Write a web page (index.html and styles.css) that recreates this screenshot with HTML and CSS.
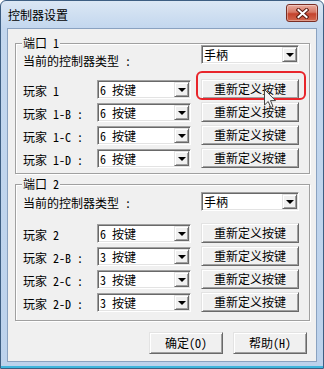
FILE: index.html
```html
<!DOCTYPE html>
<html lang="zh-CN">
<head>
    <meta charset="UTF-8">
    <title>控制器设置</title>
    <link rel="stylesheet" href="styles.css">
</head>
<body>
    <div class="window">
        <div class="titlebar">
            <span class="title">控制器设置</span>
            <span class="close">
                <svg width="13" height="11" viewBox="0 0 13 11">
                    <path d="M2.5 2 L10.5 9 M10.5 2 L2.5 9" stroke="#5b1c12" stroke-width="4" stroke-linecap="square"/>
                    <path d="M2.5 2 L10.5 9 M10.5 2 L2.5 9" stroke="#ffffff" stroke-width="2" stroke-linecap="square"/>
                </svg>
            </span>
        </div>

        <div class="client">
            <fieldset class="group g1">
                <legend>端口 1</legend>
                <div class="type-row">
                    <span class="type-label">当前的控制器类型 :</span>
                    <div class="combo wide"><span class="value">手柄</span><span class="arrow"></span></div>
                </div>
                <div class="players">
                    <div class="player"><span class="name">玩家 1</span><div class="combo"><span class="value">6 按键</span><span class="arrow"></span></div><button class="btn remap">重新定义按键</button></div>
                    <div class="player"><span class="name">玩家 1-B :</span><div class="combo"><span class="value">6 按键</span><span class="arrow"></span></div><button class="btn remap">重新定义按键</button></div>
                    <div class="player"><span class="name">玩家 1-C :</span><div class="combo"><span class="value">6 按键</span><span class="arrow"></span></div><button class="btn remap">重新定义按键</button></div>
                    <div class="player"><span class="name">玩家 1-D :</span><div class="combo"><span class="value">6 按键</span><span class="arrow"></span></div><button class="btn remap">重新定义按键</button></div>
                </div>
            </fieldset>

            <fieldset class="group g2">
                <legend>端口 2</legend>
                <div class="type-row">
                    <span class="type-label">当前的控制器类型 :</span>
                    <div class="combo wide"><span class="value">手柄</span><span class="arrow"></span></div>
                </div>
                <div class="players">
                    <div class="player"><span class="name">玩家 2</span><div class="combo"><span class="value">6 按键</span><span class="arrow"></span></div><button class="btn remap">重新定义按键</button></div>
                    <div class="player"><span class="name">玩家 2-B :</span><div class="combo"><span class="value">3 按键</span><span class="arrow"></span></div><button class="btn remap">重新定义按键</button></div>
                    <div class="player"><span class="name">玩家 2-C :</span><div class="combo"><span class="value">3 按键</span><span class="arrow"></span></div><button class="btn remap">重新定义按键</button></div>
                    <div class="player"><span class="name">玩家 2-D :</span><div class="combo"><span class="value">3 按键</span><span class="arrow"></span></div><button class="btn remap">重新定义按键</button></div>
                </div>
            </fieldset>

            <div class="actions">
                <button class="btn action">确定(O)</button>
                <button class="btn action">帮助(H)</button>
            </div>
        </div>

        <!-- highlight drawn over the first remap button -->
        <div class="highlight"></div>
        <svg class="cursor" width="13" height="20" viewBox="0 0 13 20">
            <path d="M0.5 0.5 L0.5 16 L4.2 12.5 L6.8 18.5 L9 17.5 L6.5 11.6 L11.5 11.6 Z" fill="#f4f4f4" stroke="#444" stroke-width="1"/>
        </svg>
    </div>
</body>
</html>
```

FILE: styles.css
```css
:root {
    --face: #f0f0f0;
    --light: #e3e3e3;
    --shadow: #a0a0a0;
    --dark: #696969;
}

* {
    box-sizing: border-box;
}

body {
    margin: 0;
    font-family: "Noto Sans Mono CJK SC", "Noto Sans CJK SC", "DejaVu Sans", sans-serif;
    font-size: 12px;
    color: #000000;
    background: #ffffff;
}

.window {
    position: relative;
    width: 324px;
    height: 369px;
    display: flex;
    flex-direction: column;
    padding: 0 6px 6px;
    border: 1px solid #3d5e82;
    border-radius: 6px 6px 0 0;
    background: linear-gradient(#dbe7f4, #c3d7ee 27px, #bcd2ec);
    box-shadow: inset 0 -2px #3fb5dc;
}

.titlebar {
    height: 27px;
    display: flex;
    align-items: center;
    justify-content: space-between;
    padding-left: 1px;
}

.title {
    line-height: 14px;
    font-family: "Noto Sans CJK SC", sans-serif;
}

.close {
    align-self: flex-start;
    width: 32px;
    height: 18px;
    margin: 3px -1px 0 0;
    display: flex;
    align-items: center;
    justify-content: center;
    border: 1px solid #7a2e24;
    border-radius: 3px;
    background: linear-gradient(#e9ac9f, #d67865 45%, #c4432d 55%, #d3694f);
    box-shadow: inset 0 0 0 1px rgba(255, 255, 255, 0.35);
}

.client {
    flex: 1;
    background: var(--face);
    border: 1px solid #8aa2c0;
    padding: 7px 9px 0 7px;
}

.group {
    margin: 0;
    width: 295px;
    min-width: 0;
    padding: 0 6px 5px;
    border: 1px solid var(--shadow);
    box-shadow: inset 1px 1px #ffffff, 1px 1px #ffffff;
}

.group legend {
    padding: 0 1px;
    line-height: 14px;
    background: var(--face);
}

.g2 {
    margin-top: 3px;
    padding-bottom: 8px;
}

.type-row {
    display: flex;
    justify-content: space-between;
    align-items: flex-start;
}

.type-label {
    line-height: 14px;
    padding-left: 1px;
}

.g1 .type-row {
    margin-top: -5px;
}

.g1 .type-label {
    margin-top: 9px;
}

.g2 .type-label {
    margin-top: 5px;
}

.g2 .type-row .combo {
    margin-top: 1px;
}

.combo {
    display: flex;
    width: 94px;
    height: 19px;
    padding: 1px;
    border: 1px solid;
    border-color: var(--shadow) #ffffff #ffffff var(--shadow);
    box-shadow: inset 1px 1px var(--dark), inset -1px -1px var(--light);
    background: #ffffff;
}

.combo.wide {
    width: 98px;
    margin-right: 4px;
}

.combo .value {
    flex: 1;
    padding-left: 1px;
    line-height: 15px;
}

.combo .arrow {
    width: 15px;
    height: 15px;
    display: flex;
    align-items: center;
    justify-content: center;
    border: 1px solid;
    border-color: var(--light) var(--dark) var(--dark) var(--light);
    box-shadow: inset 1px 1px #ffffff, inset -1px -1px var(--shadow);
    background: var(--face);
}

.combo .arrow::after {
    content: "";
    width: 0;
    height: 0;
    border-style: solid;
    border-width: 4px 4px 0;
    border-color: #000000 transparent transparent;
}

.players {
    display: flex;
    flex-direction: column;
    gap: 3px;
    margin-top: 11px;
}

.g2 .players {
    margin-top: 12px;
}

.player {
    display: flex;
    align-items: flex-start;
    height: 20px;
}

.player .name {
    width: 75px;
    margin-top: 5px;
    padding-left: 1px;
    line-height: 14px;
}

.player .combo {
    margin-top: 1px;
}

.btn {
    font: inherit;
    color: #000000;
    padding: 0;
    border: 1px solid;
    border-color: var(--light) var(--dark) var(--dark) var(--light);
    box-shadow: inset 1px 1px #ffffff, inset -1px -1px var(--shadow);
    background: var(--face);
    line-height: 14px;
}

.remap {
    width: 98px;
    height: 20px;
    margin-left: 10px;
}

.actions {
    display: flex;
    justify-content: flex-end;
    gap: 10px;
    margin-top: 11px;
}

.action {
    width: 74px;
    height: 22px;
}

.highlight {
    position: absolute;
    left: 195px;
    top: 70px;
    width: 110px;
    height: 29px;
    border: 2px solid #e8252b;
    border-radius: 6px;
}

.cursor {
    position: absolute;
    left: 263px;
    top: 88px;
}
```
